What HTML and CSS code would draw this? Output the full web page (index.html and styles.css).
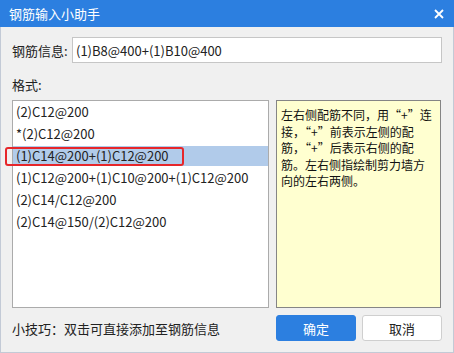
FILE: index.html
```html
<!DOCTYPE html>
<html lang="zh-CN">
<head>
    <meta charset="UTF-8">
    <title>钢筋输入小助手</title>
    <link rel="stylesheet" href="styles.css">
</head>
<body>
    <div class="dialog">
        <header class="titlebar">
            <span class="title">钢筋输入小助手</span>
            <svg class="close" width="10" height="10" viewBox="0 0 10 10">
                <path d="M1 1L9 9M9 1L1 9" stroke="#fff" stroke-width="1.8"/>
            </svg>
        </header>
        <main class="content">
            <div class="info-row">
                <label class="info-label">钢筋信息:</label>
                <input class="info-input" type="text" value="(1)B8@400+(1)B10@400">
            </div>
            <div class="format-label">格式:</div>
            <div class="panes">
                <div class="format-list">
                    <div class="item">(2)C12@200</div>
                    <div class="item">*(2)C12@200</div>
                    <div class="item selected">(1)C14@200+(1)C12@200<span class="mark"></span></div>
                    <div class="item">(1)C12@200+(1)C10@200+(1)C12@200</div>
                    <div class="item">(2)C14/C12@200</div>
                    <div class="item">(2)C14@150/(2)C12@200</div>
                </div>
                <div class="hint">左右侧配筋不同，用“+”连接，“+”前表示左侧的配筋，“+”后表示右侧的配筋。左右侧指绘制剪力墙方向的左右两侧。</div>
            </div>
            <div class="footer">
                <span class="tip">小技巧：双击可直接添加至钢筋信息</span>
                <div class="buttons">
                    <button class="btn primary">确定</button>
                    <button class="btn">取消</button>
                </div>
            </div>
        </main>
    </div>
</body>
</html>
```

FILE: styles.css
```css
body {
    margin: 0;
    font-family: "Noto Sans CJK SC", "Noto Sans", sans-serif;
    font-size: 13px;
    color: #222;
    background: #fff;
}

.dialog {
    width: 454px;
    height: 353px;
    box-sizing: border-box;
    background: #f0f0f0;
    border: 1px solid #c3cad6;
    border-top: none;
}

.titlebar {
    height: 27px;
    margin: 0 -1px;
    background: #2c7fe0;
    display: flex;
    align-items: center;
    justify-content: space-between;
    padding: 0 10px 0 9px;
    color: #fff;
}

.title {
    font-size: 13px;
}

.content {
    padding: 10px 11px 0 11px;
}

.info-row {
    display: flex;
    align-items: center;
    height: 26px;
}

.info-label {
    width: 60px;
}

.info-input {
    flex: 1;
    height: 26px;
    box-sizing: border-box;
    border: 1px solid #c6c6c6;
    padding: 0 3px;
    font-family: inherit;
    font-size: 13px;
    color: #222;
    outline: none;
}

.format-label {
    height: 20px;
    line-height: 20px;
    margin-top: 12px;
}

.panes {
    display: flex;
    gap: 7px;
    margin-top: 5px;
}

.format-list {
    position: relative;
    width: 257px;
    height: 208px;
    box-sizing: border-box;
    background: #fff;
    border: 1px solid #ababab;
    padding-top: 1px;
}

.item {
    height: 20px;
    line-height: 20px;
    margin-bottom: 2px;
    padding-left: 3px;
    white-space: nowrap;
}

.item.selected {
    position: relative;
    background: #b1cbea;
}

.mark {
    position: absolute;
    left: -8px;
    top: 1px;
    width: 175px;
    height: 15px;
    border: 2.5px solid #e6262a;
    border-radius: 3px;
}

.hint {
    width: 165px;
    height: 208px;
    box-sizing: border-box;
    background: #ffffd0;
    border: 1px solid #858585;
    padding: 6px 4px 0 4px;
    font-size: 12px;
    line-height: 16.6px;
    color: #111;
}

.footer {
    display: flex;
    justify-content: space-between;
    align-items: center;
    margin-top: 7px;
}

.buttons {
    display: flex;
    gap: 6px;
}

.btn {
    width: 80px;
    height: 26px;
    border: 1px solid #cfcfcf;
    border-radius: 3px;
    background: #fff;
    font-family: inherit;
    font-size: 13px;
    color: #222;
    padding: 0;
}

.btn.primary {
    background: #2c7fe0;
    border-color: #2c7fe0;
    color: #fff;
}
```
